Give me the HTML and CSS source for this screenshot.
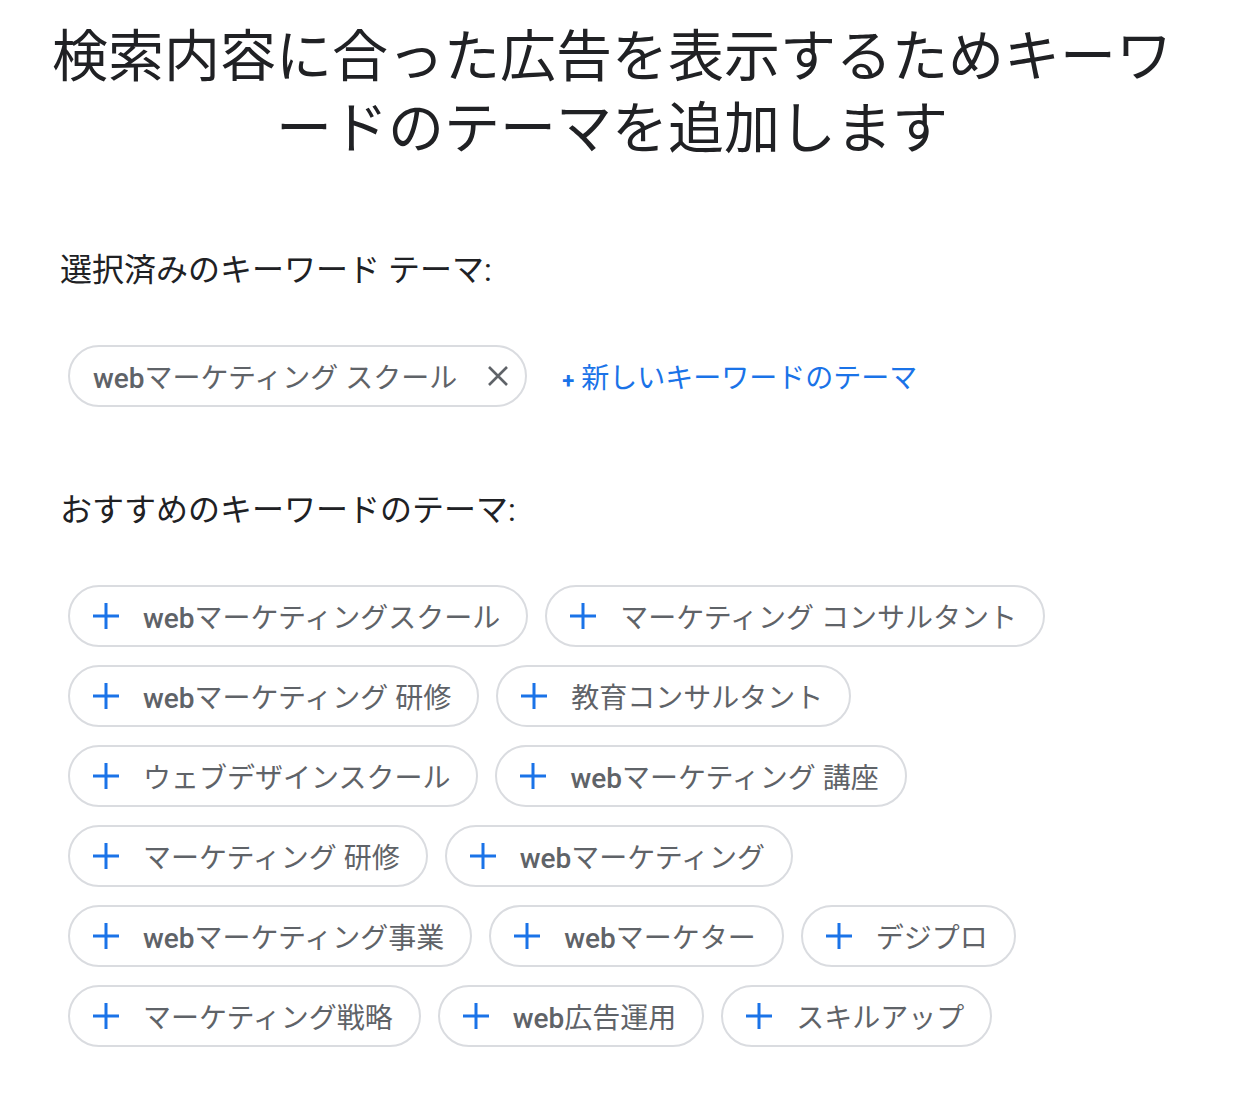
FILE: index.html
```html
<!DOCTYPE html>
<html lang="ja">
<head>
  <meta charset="UTF-8"/>
  <meta name="viewport" content="width=device-width, initial-scale=1"/>
  <title>キーワードのテーマ</title>
  <link rel="stylesheet" href="styles.css">
</head>
<body>
  <div class="page">
    <h1 class="title">検索内容に合った広告を表示するためキーワードのテーマを追加します</h1>

    <!-- Selected themes -->
    <h2 class="section-label">選択済みのキーワード テーマ:</h2>
    <div class="selected-row">
      <span class="chip chip-selected">
        <span class="chip-text"><b class="latin">web</b>マーケティング スクール</span>
        <svg class="icon-close" width="24" height="24" viewBox="0 0 24 24"><path d="M3 3L21 21M21 3L3 21" stroke="#5f6368" stroke-width="2.6" fill="none"/></svg>
      </span>
      <a class="add-link" href="#"><span class="add-plus">+</span> 新しいキーワードのテーマ</a>
    </div>

    <!-- Suggested themes -->
    <h2 class="section-label section-label-2">おすすめのキーワードのテーマ:</h2>
    <div class="chip-list">
      <div class="chip-row">
        <span class="chip"><svg class="icon-plus" width="28" height="28" viewBox="0 0 28 28"><path d="M14 1V27M1 14H27" stroke="#1a73e8" stroke-width="3" fill="none"/></svg><span class="chip-text"><b class="latin">web</b>マーケティングスクール</span></span>
        <span class="chip"><svg class="icon-plus" width="28" height="28" viewBox="0 0 28 28"><path d="M14 1V27M1 14H27" stroke="#1a73e8" stroke-width="3" fill="none"/></svg><span class="chip-text">マーケティング コンサルタント</span></span>
      </div>
      <div class="chip-row">
        <span class="chip"><svg class="icon-plus" width="28" height="28" viewBox="0 0 28 28"><path d="M14 1V27M1 14H27" stroke="#1a73e8" stroke-width="3" fill="none"/></svg><span class="chip-text"><b class="latin">web</b>マーケティング 研修</span></span>
        <span class="chip"><svg class="icon-plus" width="28" height="28" viewBox="0 0 28 28"><path d="M14 1V27M1 14H27" stroke="#1a73e8" stroke-width="3" fill="none"/></svg><span class="chip-text">教育コンサルタント</span></span>
      </div>
      <div class="chip-row">
        <span class="chip"><svg class="icon-plus" width="28" height="28" viewBox="0 0 28 28"><path d="M14 1V27M1 14H27" stroke="#1a73e8" stroke-width="3" fill="none"/></svg><span class="chip-text">ウェブデザインスクール</span></span>
        <span class="chip"><svg class="icon-plus" width="28" height="28" viewBox="0 0 28 28"><path d="M14 1V27M1 14H27" stroke="#1a73e8" stroke-width="3" fill="none"/></svg><span class="chip-text"><b class="latin">web</b>マーケティング 講座</span></span>
      </div>
      <div class="chip-row">
        <span class="chip"><svg class="icon-plus" width="28" height="28" viewBox="0 0 28 28"><path d="M14 1V27M1 14H27" stroke="#1a73e8" stroke-width="3" fill="none"/></svg><span class="chip-text">マーケティング 研修</span></span>
        <span class="chip"><svg class="icon-plus" width="28" height="28" viewBox="0 0 28 28"><path d="M14 1V27M1 14H27" stroke="#1a73e8" stroke-width="3" fill="none"/></svg><span class="chip-text"><b class="latin">web</b>マーケティング</span></span>
      </div>
      <div class="chip-row">
        <span class="chip"><svg class="icon-plus" width="28" height="28" viewBox="0 0 28 28"><path d="M14 1V27M1 14H27" stroke="#1a73e8" stroke-width="3" fill="none"/></svg><span class="chip-text"><b class="latin">web</b>マーケティング事業</span></span>
        <span class="chip"><svg class="icon-plus" width="28" height="28" viewBox="0 0 28 28"><path d="M14 1V27M1 14H27" stroke="#1a73e8" stroke-width="3" fill="none"/></svg><span class="chip-text"><b class="latin">web</b>マーケター</span></span>
        <span class="chip"><svg class="icon-plus" width="28" height="28" viewBox="0 0 28 28"><path d="M14 1V27M1 14H27" stroke="#1a73e8" stroke-width="3" fill="none"/></svg><span class="chip-text">デジプロ</span></span>
      </div>
      <div class="chip-row">
        <span class="chip"><svg class="icon-plus" width="28" height="28" viewBox="0 0 28 28"><path d="M14 1V27M1 14H27" stroke="#1a73e8" stroke-width="3" fill="none"/></svg><span class="chip-text">マーケティング戦略</span></span>
        <span class="chip"><svg class="icon-plus" width="28" height="28" viewBox="0 0 28 28"><path d="M14 1V27M1 14H27" stroke="#1a73e8" stroke-width="3" fill="none"/></svg><span class="chip-text"><b class="latin">web</b>広告運用</span></span>
        <span class="chip"><svg class="icon-plus" width="28" height="28" viewBox="0 0 28 28"><path d="M14 1V27M1 14H27" stroke="#1a73e8" stroke-width="3" fill="none"/></svg><span class="chip-text">スキルアップ</span></span>
      </div>
    </div>
  </div>
</body>
</html>
```

FILE: styles.css
```css
body{
  margin: 0;
  background: #ffffff;
  font-family: Roboto, "Noto Sans CJK JP", sans-serif;
  color: #202124;
}
.page{
  display: flex;
  flex-direction: column;
  align-items: flex-start;
  padding: 21px 0 0 60px;
}
.title{
  align-self: stretch;
  margin: 0 56px 0 -14px;
  font-size: 56px;
  font-weight: 400;
  line-height: 72px;
  text-align: center;
  color: #202124;
}
.section-label{
  margin: 85px 0 0 0;
  font-size: 32px;
  font-weight: 400;
  line-height: 40px;
  color: #202124;
}
.section-label-2{
  margin-top: 83px;
}
.selected-row{
  display: flex;
  align-items: center;
  gap: 35px;
  margin: 55px 0 0 8px;
}
.chip{
  display: inline-flex;
  align-items: center;
  height: 62px;
  box-sizing: border-box;
  border: 2px solid #dadce0;
  border-radius: 31px;
  padding: 0 26px 0 22px;
  font-size: 28px;
  color: #5f6368;
  white-space: nowrap;
}
.latin{
  font-weight: 500;
}
.chip-selected{
  padding: 0 15px 0 23px;
}
.chip-selected .chip-text{
  margin-right: 29px;
}
.icon-plus{
  margin-right: 23px;
  flex: none;
}
.icon-close{
  flex: none;
}
.add-link{
  font-size: 28px;
  color: #1a73e8;
  text-decoration: none;
}
.add-plus{
  font-size: 22px;
  font-weight: 700;
}
.chip-list{
  display: flex;
  flex-direction: column;
  gap: 18px;
  margin: 55px 0 0 8px;
}
.chip-row{
  display: flex;
  gap: 17px;
}
```
